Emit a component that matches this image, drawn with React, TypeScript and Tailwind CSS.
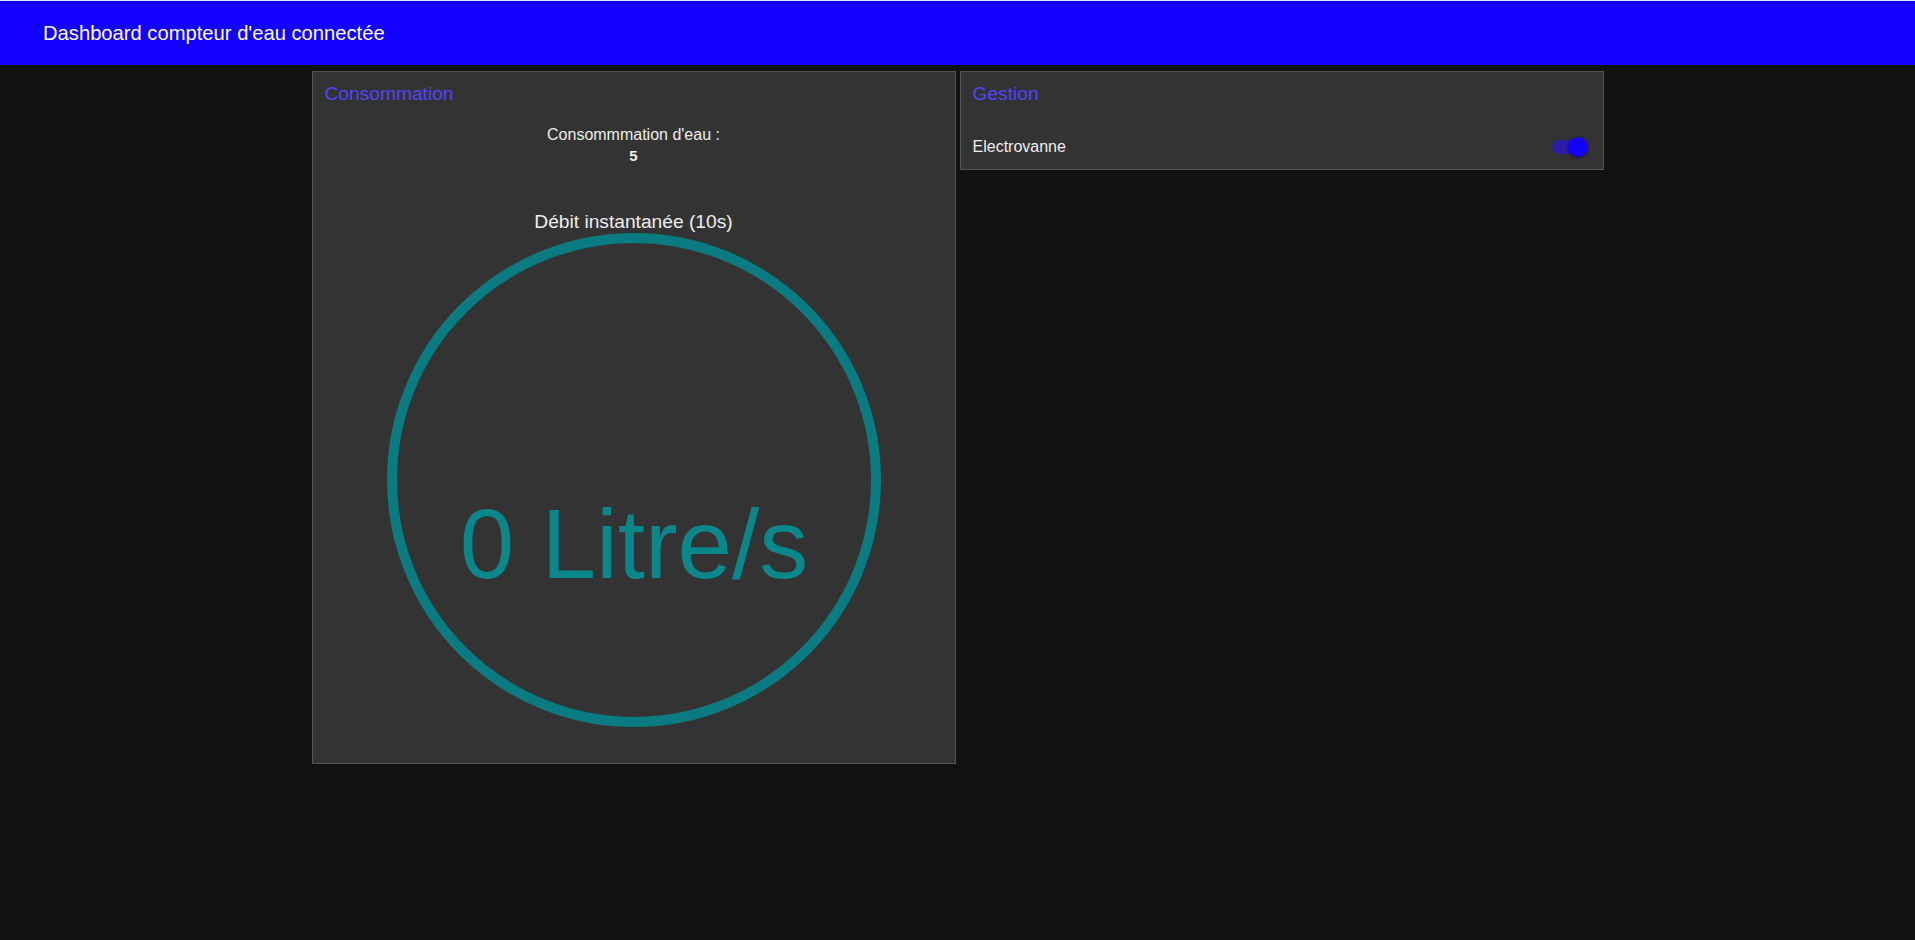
import { FC } from "react";

const font = { fontFamily: '"Liberation Sans", Arial, sans-serif' };

const GroupTitle: FC<{ label: string }> = ({ label }) => (
  <div className="h-[42px] pt-[2px] flex items-center px-3 text-[19.2px] text-[#5244ff]">
    {label}
  </div>
);

const Switch: FC<{ on: boolean }> = ({ on }) => (
  <div className="relative w-[36px] h-[20px]">
    <div
      className={`absolute left-0 top-[3px] h-[14px] w-[34px] rounded-full ${
        on ? "bg-[#2a1ea5]" : "bg-[#666]"
      }`}
    />
    <div
      className={`absolute top-0 h-[20px] w-[20px] rounded-full shadow-[0_1px_3px_rgba(0,0,0,0.6)] ${
        on ? "right-0 bg-[#1400ff]" : "left-0 bg-[#ccc]"
      }`}
    />
  </div>
);

const FlowGauge: FC<{ value: number }> = ({ value }) => (
  <svg width="494" height="494" viewBox="0 0 494 494" className="block mx-auto">
    <circle cx="247" cy="247" r="242" fill="none" stroke="#0a7b81" strokeWidth="10" />
    <text
      x="247"
      y="345"
      textAnchor="middle"
      fill="#0a878b"
      fontSize="98"
      fontFamily='"Liberation Sans", Arial, sans-serif'
    >
      {value} Litre/s
    </text>
  </svg>
);

const App: FC = () => {
  return (
    <div className="min-h-[940px] bg-[#111111] text-[#eeeeee]" style={font}>
      <header className="h-[65px] border-t border-[#e6e6e6] bg-[#1400ff] flex items-center pl-[43px] text-[20.2px] text-white">
        Dashboard compteur d'eau connectée
      </header>

      <main className="flex justify-center items-start gap-[4px] pt-[6px]">
        <section className="w-[644px] h-[693px] border border-[#555555] bg-[#333333]">
          <GroupTitle label="Consommation" />
          <div className="mt-[10px] text-center text-[16px] leading-[21px]">
            <div>Consommmation d'eau :</div>
            <div className="font-bold text-[15px]">5</div>
          </div>
          <div className="mt-[44px] text-center text-[19.2px] leading-[23px]">
            Débit instantanée (10s)
          </div>
          <FlowGauge value={0} />
        </section>

        <section className="w-[644px] h-[99px] border border-[#555555] bg-[#333333]">
          <GroupTitle label="Gestion" />
          <div className="h-[54px] pt-[12px] pl-3 pr-[15px] flex items-center justify-between text-[16px]">
            <span>Electrovanne</span>
            <Switch on />
          </div>
        </section>
      </main>
    </div>
  );
};

export default App;
